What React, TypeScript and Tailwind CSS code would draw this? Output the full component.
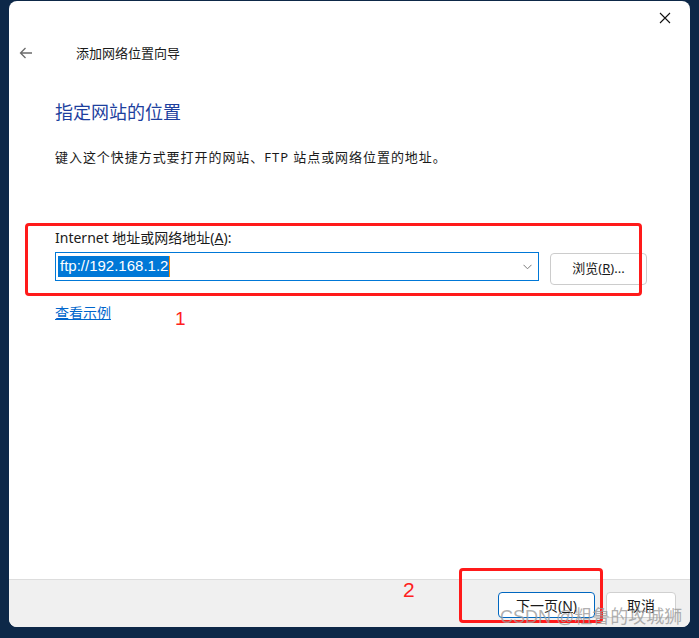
export default function App() {
  return (
    <div className="relative w-[699px] h-[638px] overflow-hidden bg-[#0d2848] pt-[1px] pl-[9px] font-['Noto_Sans','Noto_Sans_CJK_SC',sans-serif] text-[#1a1a1a]">
      <div className="flex flex-col w-[681px] h-[626px] rounded-lg bg-white overflow-hidden">
        {/* title bar */}
        <div className="flex justify-end h-[34px]">
          <button className="flex items-center justify-center w-[46px] h-[34px] mr-[2px]">
            <svg width="12" height="12" viewBox="0 0 12 12" fill="none" stroke="#111" strokeWidth="1.1">
              <path d="M1 1 L11 11 M11 1 L1 11" />
            </svg>
          </button>
        </div>

        {/* wizard header */}
        <div className="flex items-center h-[36px]">
          <svg className="ml-[10px]" width="14" height="12" viewBox="0 0 14 12" fill="none" stroke="#6b6b6b" strokeWidth="1.3">
            <path d="M13 6 H1.5 M6.5 1 L1.5 6 L6.5 11" />
          </svg>
          <span className="ml-[43px] text-[13px] leading-[18px]">添加网络位置向导</span>
        </div>

        <div className="flex flex-col pl-[46px]">
          <h1 className="mt-[29px] text-[18px] leading-[24px] text-[#1d3f9e]">指定网站的位置</h1>
          <p className="mt-[24px] text-[13px] leading-[18px] tracking-[0.95px]">
            键入这个快捷方式要打开的网站、FTP 站点或网络位置的地址。
          </p>

          <label className="mt-[63px] text-[14px] leading-[18px]">
            Internet 地址或网络地址(<span className="underline">A</span>):
          </label>
          <div className="flex items-start gap-[11px] mt-[5px]">
            <div className="flex items-center w-[484px] h-[29px] border border-[#0078d7] bg-white pl-[2px] pr-[6px]">
              <span className="flex items-center h-[21px] bg-[#0078d7] text-white text-[15px] font-['Liberation_Sans',sans-serif] pl-[2px] pr-[1px] border-r border-[#ff8c00]">
                ftp://192.168.1.2
              </span>
              <div className="flex-1" />
              <svg width="9" height="6" viewBox="0 0 9 6" fill="none" stroke="#7a7a7a" strokeWidth="1">
                <path d="M0.5 0.8 L4.5 4.8 L8.5 0.8" />
              </svg>
            </div>
            <button className="mt-[1px] w-[97px] h-[32px] rounded-[4px] border border-[#cccccc] bg-white text-[13px]">
              浏览(<span className="underline">R</span>)...
            </button>
          </div>

          <a className="mt-[19px] w-fit text-[14px] leading-[18px] text-[#0066cc] underline">查看示例</a>
        </div>

        <div className="flex-1" />

        {/* footer */}
        <div className="flex justify-end items-start gap-[11px] h-[48px] pt-[12px] pr-[14px] bg-[#f0f0f0] border-t border-[#dddddd]">
          <button className="w-[97px] h-[26px] rounded-[4px] border border-[#0067c0] bg-white text-[14px]">
            下一页(<span className="underline">N</span>)
          </button>
          <button className="w-[70px] h-[26px] rounded-[4px] border border-[#d0d0d0] bg-white text-[14px]">
            取消
          </button>
        </div>
      </div>

      {/* annotations */}
      <div className="absolute left-[25px] top-[223px] w-[617px] h-[73px] border-[3px] border-[#ff1a1a] rounded-[4px]" />
      <div className="absolute left-[459px] top-[568px] w-[144px] h-[55px] border-[3px] border-[#ff1a1a] rounded-[4px]" />
      <span className="absolute left-[175px] top-[307px] text-[19px] leading-[24px] text-[#ff2020] font-['Liberation_Sans',sans-serif]">1</span>
      <span className="absolute left-[403px] top-[577px] text-[21px] leading-[26px] text-[#ff2020] font-['Liberation_Sans',sans-serif]">2</span>
      <span className="absolute left-[500px] top-[605px] text-[18px] leading-[24px] text-[#9a9a9a]/80 font-['Liberation_Sans','Noto_Sans_CJK_SC',sans-serif] whitespace-nowrap">
        CSDN @粗鲁的攻城狮
      </span>
    </div>
  );
}
